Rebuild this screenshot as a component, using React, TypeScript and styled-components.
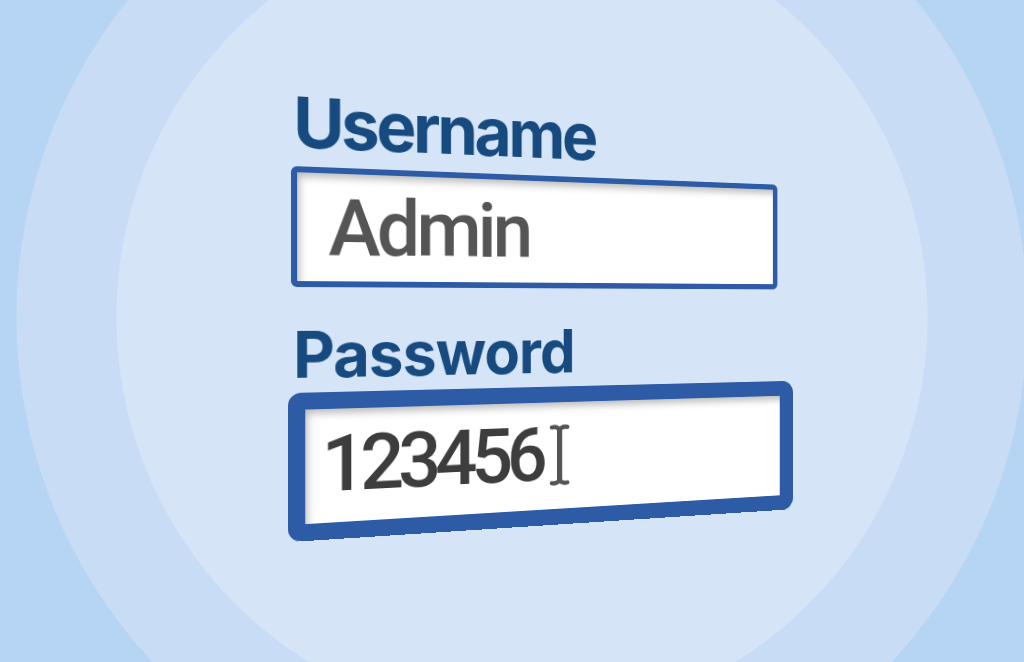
import React from "react";
import styled, { createGlobalStyle } from "styled-components";

const GlobalStyle = createGlobalStyle`
  html, body {
    margin: 0;
    padding: 0;
    width: 1024px;
    height: 662px;
    overflow: hidden;
  }
  body {
    font-family: "Inter", "Noto Sans", sans-serif;
  }
`;

const Stage = styled.main`
  width: 1024px;
  height: 662px;
  box-sizing: border-box;
  padding: 87px 0 0 291px;
  background: radial-gradient(
    circle at 522px 317px,
    #d5e5f7 0,
    #d5e5f7 405px,
    #c8ddf5 406px,
    #c8ddf5 505px,
    #b6d4f4 506px
  );
  perspective: 1000px;
  perspective-origin: 512px 305px;
  overflow: hidden;
`;

const Form = styled.form`
  display: flex;
  flex-direction: column;
  align-items: flex-start;
  transform-origin: 0 50%;
  transform: rotateY(16.4deg);
`;

const Label = styled.label<{ $size: number; $gap: number; $top?: number; $spacing: number }>`
  display: block;
  font-family: "Inter", "Noto Sans", sans-serif;
  font-weight: 700;
  font-size: ${(p) => p.$size}px;
  line-height: 1;
  letter-spacing: ${(p) => p.$spacing}px;
  color: #174a7e;
  margin: ${(p) => p.$top ?? 0}px 0 ${(p) => p.$gap}px 2px;
`;

const Field = styled.div<{ $width: number; $height: number; $border: number; $radius: number; $pad: number; $shift?: number }>`
  box-sizing: border-box;
  width: ${(p) => p.$width}px;
  height: ${(p) => p.$height}px;
  margin-left: ${(p) => p.$shift ?? 0}px;
  border: ${(p) => p.$border}px solid #2d5ba6;
  border-radius: ${(p) => p.$radius}px;
  background: #ffffff;
  box-shadow: inset 7px 9px 9px -5px rgba(0, 0, 0, 0.28);
  display: flex;
  align-items: center;
  padding: 0 0 ${(p) => (p.$border > 10 ? 4 : 0)}px ${(p) => p.$pad}px;
`;

const Value = styled.span<{ $color: string; $spacing: number }>`
  font-family: "Roboto", "Liberation Sans", sans-serif;
  font-weight: 500;
  font-size: 80px;
  line-height: 1;
  color: ${(p) => p.$color};
  letter-spacing: ${(p) => p.$spacing}px;
`;

const Caret = styled.svg`
  width: 24px;
  height: 68px;
  margin-left: 8px;
  margin-top: 2px;
  flex: none;
`;

const IBeam = () => (
  <Caret viewBox="0 0 24 68" aria-hidden="true">
    <path
      d="M3 4 C7 3 10 4 12 7 C14 4 17 3 21 4 M3 64 C7 65 10 64 12 61 C14 64 17 65 21 64"
      fill="none"
      stroke="#555555"
      strokeWidth="4.5"
      strokeLinecap="round"
    />
    <path d="M12 7 V61" stroke="#555555" strokeWidth="6" />
  </Caret>
);

export default function App() {
  return (
    <>
      <GlobalStyle />
      <Stage>
        <Form onSubmit={(e) => e.preventDefault()}>
          <Label $size={70} $gap={9} $spacing={-3.5}>Username</Label>
          <Field $width={550} $height={121} $border={6} $radius={6} $pad={31}>
            <Value $color="#555555" $spacing={-4}>Admin</Value>
          </Field>
          <Label $size={64} $gap={6} $top={36} $spacing={-1}>Password</Label>
          <Field $width={573} $height={149} $border={17} $radius={13} $pad={16} $shift={-3}>
            <Value $color="#3d3d3d" $spacing={-6.5}>123456</Value>
            <IBeam />
          </Field>
        </Form>
      </Stage>
    </>
  );
}
